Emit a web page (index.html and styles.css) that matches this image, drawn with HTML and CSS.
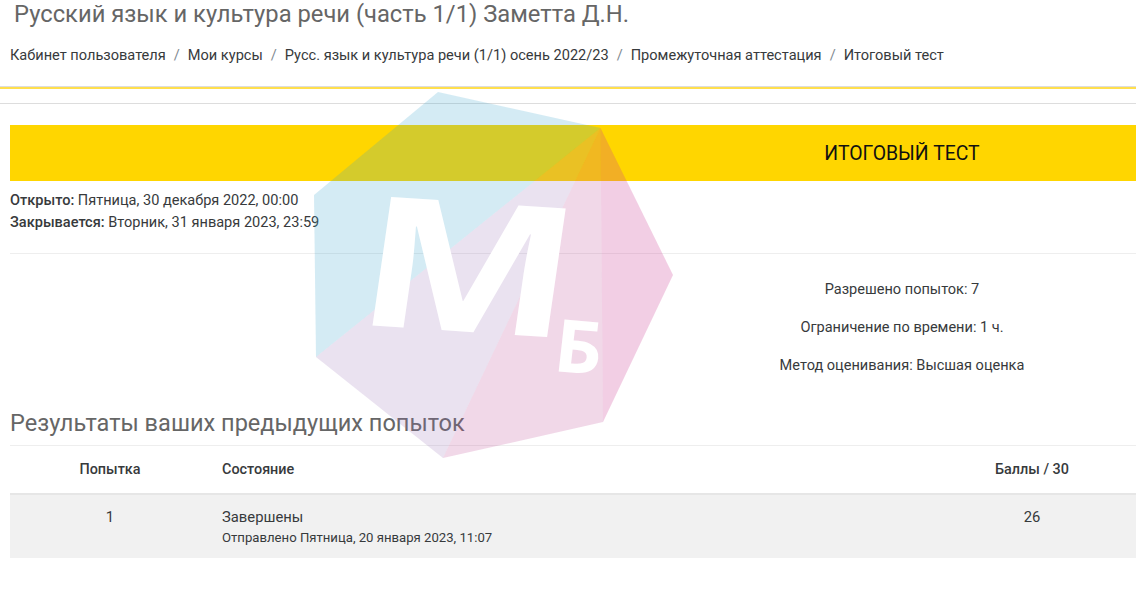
FILE: index.html
```html
<!DOCTYPE html>
<html lang="ru">
<head>
<meta charset="utf-8">
<title>Итоговый тест</title>
<link rel="stylesheet" href="styles.css">
</head>
<body>
<header class="page-header">
  <h1 class="course-title">Русский язык и культура речи (часть 1/1) Заметта Д.Н.</h1>
  <nav class="breadcrumb">
    <a href="#">Кабинет пользователя</a><span class="sep">/</span><a href="#">Мои курсы</a><span class="sep">/</span><a href="#">Русс. язык и культура речи (1/1) осень 2022/23</a><span class="sep">/</span><a href="#">Промежуточная аттестация</a><span class="sep">/</span><a href="#">Итоговый тест</a>
  </nav>
</header>
<div class="rule"></div>
<main class="content">
  <div class="band"><h2 class="band-title">ИТОГОВЫЙ ТЕСТ</h2></div>
  <div class="dates">
    <div><strong>Открыто:</strong> Пятница, 30 декабря 2022, 00:00</div>
    <div><strong>Закрывается:</strong> Вторник, 31 января 2023, 23:59</div>
  </div>
  <div class="info">
    <p>Разрешено попыток: 7</p>
    <p>Ограничение по времени: 1 ч.</p>
    <p>Метод оценивания: Высшая оценка</p>
  </div>
  <h3 class="results-title">Результаты ваших предыдущих попыток</h3>
  <table class="attempts">
    <thead>
      <tr><th class="c-num">Попытка</th><th class="c-state">Состояние</th><th class="c-score">Баллы / 30</th></tr>
    </thead>
    <tbody>
      <tr>
        <td class="c-num">1</td>
        <td class="c-state">Завершены<div class="submitted">Отправлено Пятница, 20 января 2023, 11:07</div></td>
        <td class="c-score">26</td>
      </tr>
    </tbody>
  </table>
</main>
<svg class="watermark" width="1136" height="595" viewBox="0 0 1136 595" aria-hidden="true">
  <polygon class="f-blue" points="438,92 600.5,128 316,357 314,195"/>
  <polygon class="f-lav" points="600.5,128 443,458 316,357"/>
  <polygon class="f-pink" points="600.5,128 603,422 443,458"/>
  <polygon class="f-rose" points="600.5,128 673,275 603,422"/>
  <text class="wm-big" transform="matrix(1.27 0.085 -0.145 1 352 324)">М</text>
  <text class="wm-small" transform="matrix(1.1 0.09 -0.12 1.07 552 371)">Б</text>
</svg>
</body>
</html>
```
FILE: styles.css
```css
* { box-sizing: border-box; }
html, body { margin: 0; padding: 0; }
body {
  width: 1136px;
  height: 595px;
  overflow: hidden;
  background: #fff;
  color: #373a3c;
  font-family: Roboto, "Liberation Sans", sans-serif;
  font-size: 14.55px;
  line-height: 22px;
  position: relative;
}
.page-header {
  height: 89px;
  padding: 0 0 0 10px;
  border-bottom: 2px solid #ffdf4d;
  box-shadow: 0 -1px 0 #ddd inset;
}
.course-title {
  margin: 0;
  padding: 0 0 0 4px;
  font-size: 23.75px;
  line-height: 28px;
  font-weight: 400;
  color: #666;
}
.breadcrumb {
  margin-top: 17px;
  height: 21px;
  line-height: 21px;
  font-size: 14.58px;
  white-space: nowrap;
}
.breadcrumb a { color: #373a3c; text-decoration: none; }
.sep { color: #818a91; margin: 0 8px; }
.rule { height: 1px; margin-top: 14px; background: #ddd; }
.content { padding: 21px 0 0 10px; }
.band {
  height: 56px;
  padding: 2px 0 0 658px;
  background: #ffd600;
  display: flex;
  align-items: center;
  justify-content: center;
}
.band-title {
  margin: 0;
  font-size: 19.4px;
  font-weight: 400;
  color: #111;
}
.dates { margin-top: 9px; padding-bottom: 19px; border-bottom: 1px solid #eee; }
.dates strong { font-weight: 500; }
.info { padding-left: 658px; margin-top: 25px; text-align: center; }
.info p { margin: 0 0 16px; }
.results-title {
  margin: 32px 0 0;
  padding-bottom: 8px;
  font-size: 23.55px;
  line-height: 28px;
  font-weight: 400;
  color: #666;
  border-bottom: 1px solid #eee;
}
.attempts { width: 1126px; border-collapse: collapse; table-layout: fixed; }
.attempts th {
  height: 48px;
  padding: 1px 0 0;
  font-size: 14.4px;
  font-weight: 500;
  border-bottom: 2px solid #e6e6e6;
  vertical-align: middle;
}
.attempts td { height: 64px; padding: 11px 0 0; vertical-align: top; background: #f1f1f1; font-size: 14.8px; }
.c-num { width: 200px; text-align: center; }
.c-state { text-align: left; padding-left: 12px !important; }
.c-score { width: 208px; text-align: center; }
.submitted { font-size: 13.15px; line-height: 20px; margin-top: 0; }
.watermark { position: absolute; left: 0; top: 0; pointer-events: none; }
.f-blue { fill: rgba(55, 162, 204, 0.216); }
.f-lav { fill: rgba(150, 110, 180, 0.2); }
.f-pink { fill: rgba(191, 77, 150, 0.22); }
.f-rose { fill: rgba(203, 59, 147, 0.25); }
.wm-big, .wm-small { fill: #fff; font-family: "Open Sans", Roboto, sans-serif; font-weight: 700; }
.wm-big { font-size: 180px; }
.wm-small { font-size: 68px; }
```
